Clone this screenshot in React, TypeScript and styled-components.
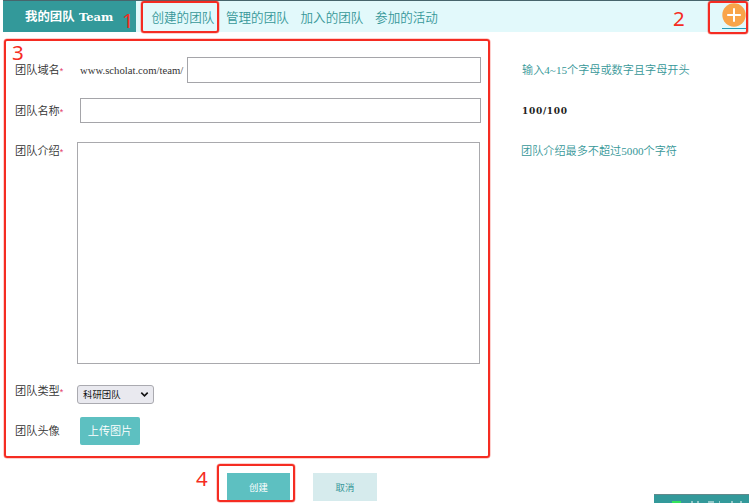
import React from "react";
import styled, { createGlobalStyle } from "styled-components";

const Global = createGlobalStyle`
  * { box-sizing: border-box; }
  html, body { margin: 0; background: #fff; overflow: hidden; }
  body { font-family: "Liberation Serif", "Noto Sans CJK SC", serif; color: #333; }
  button, input, textarea { font-family: inherit; margin: 0; outline: none; }
`;

const cjk = `"Noto Sans CJK SC", sans-serif`;

const Page = styled.div`
  position: relative;
  width: 749px;
  height: 503px;
  overflow: hidden;
  background: #fff;
`;

const Header = styled.header`
  display: flex;
  height: 32px;
  margin-left: 3px;
  border-top: 1px solid #47656c;
  background: #e2f9fb;
`;

const Brand = styled.h1`
  width: 133px;
  margin: 0;
  padding-left: 22px;
  background: #33999a;
  color: #fff;
  font: bold 12.4px/32px "DejaVu Serif", "Noto Sans CJK SC", serif;
  white-space: nowrap;
`;

const BrandLatin = styled.span`
  font-size: 11.6px;
`;

const Nav = styled.nav`
  display: flex;
  gap: 11.8px;
  margin-left: 15.5px;
`;

const NavLink = styled.a`
  color: #369798;
  font: 350 12.55px/31px ${cjk};
  white-space: nowrap;
`;

const AddButton = styled.a`
  display: flex;
  justify-content: center;
  width: 24px;
  height: 28px;
  margin-left: auto;
  margin-right: 3px;
  border-bottom: 1px solid #2499b8;
`;

const Form = styled.form`
  padding: 25px 0 0 15px;
`;

const Row = styled.div<{ $height: number }>`
  display: flex;
  align-items: flex-start;
  height: ${(p) => p.$height}px;
`;

const Label = styled.label<{ $width?: number; $drop?: number }>`
  width: ${(p) => p.$width ?? 65}px;
  flex: none;
  padding-top: ${(p) => p.$drop ?? 0}px;
  font: 350 11.2px/25px ${cjk};
  white-space: nowrap;
`;

const Required = styled.span`
  color: #e33c68;
  font: 9px/10px "Liberation Sans", sans-serif;
`;

const Prefix = styled.span`
  width: 107px;
  flex: none;
  font-size: 10.7px;
  line-height: 27px;
  white-space: nowrap;
`;

const TextInput = styled.input<{ $width: number; $height: number }>`
  width: ${(p) => p.$width}px;
  height: ${(p) => p.$height}px;
  padding: 2px 5px;
  border: 1px solid #a5a5a9;
  background: #fff;
`;

const AreaSlot = styled.div`
  height: 226px;
  padding-top: 4px;
`;

const TextArea = styled.textarea`
  display: block;
  width: 403px;
  height: 222px;
  padding: 4px;
  border: 1px solid #a9a9ad;
  resize: none;
`;

const Hint = styled.span`
  margin-left: 41px;
  color: #369798;
  font: 350 11.15px/26px "Liberation Serif", "Noto Sans CJK SC", serif;
  white-space: nowrap;
`;

const Counter = styled.strong`
  margin-left: 41px;
  color: #222;
  font: bold 9px/26px "DejaVu Serif", serif;
  letter-spacing: 0.7px;
`;

const Select = styled.div`
  display: flex;
  align-items: center;
  justify-content: space-between;
  width: 77px;
  height: 19px;
  margin-top: 7px;
  padding: 0 4px 0 5px;
  border: 1px solid #aaaab0;
  border-radius: 3px;
  background: #e9e9ef;
  color: #111;
  font: 9.4px/17px ${cjk};
`;

const Upload = styled.button`
  width: 60px;
  height: 28px;
  margin-top: 1px;
  padding: 0 0 1px;
  border: 0;
  border-radius: 2px;
  background: #5dc0c1;
  color: #fff;
  font: 350 11.1px/27px ${cjk};
`;

const Actions = styled.div`
  display: flex;
  gap: 23px;
  padding: 18px 0 0 212px;
`;

const ActionButton = styled.button<{ $primary?: boolean }>`
  width: ${(p) => (p.$primary ? 63 : 64)}px;
  height: 28px;
  padding: 0;
  border: 0;
  background: ${(p) => (p.$primary ? "#5dc0c1" : "#d6ebed")};
  color: ${(p) => (p.$primary ? "#fff" : "#369798")};
  font: 9.4px/28px ${cjk};
`;

const Mark = styled.div<{ $x: number; $y: number; $w: number; $h: number }>`
  position: absolute;
  left: ${(p) => p.$x}px;
  top: ${(p) => p.$y}px;
  width: ${(p) => p.$w}px;
  height: ${(p) => p.$h}px;
  border: 2px solid #f52c22;
  border-radius: 3px;
  box-shadow: 0 0 0 0.5px #f52c2270;
  pointer-events: none;
`;

const MarkNumber = styled.span<{ $x: number; $y: number }>`
  position: absolute;
  left: ${(p) => p.$x}px;
  top: ${(p) => p.$y}px;
  color: #f52c22;
  font: 400 20.5px/20px "Noto Sans", sans-serif;
`;

const ChatBar = styled.div`
  position: absolute;
  right: 0;
  bottom: 0;
  display: flex;
  align-items: flex-start;
  width: 95px;
  height: 9px;
  border-top: 1px solid #62898b;
  background: #33999a;
`;

export default function App() {
  return (
    <>
      <Global />
      <Page>
        <Header>
          <Brand>我的团队 <BrandLatin>Team</BrandLatin></Brand>
          <Nav>
            {["创建的团队", "管理的团队", "加入的团队", "参加的活动"].map((t) => (
              <NavLink key={t}>{t}</NavLink>
            ))}
          </Nav>
          <AddButton aria-label="add">
            <svg width="24" height="27" viewBox="0 0 24 27">
              <circle cx="12" cy="14" r="11.7" fill="#f9a449" />
              <path d="M12 7.2v13.6M5.2 14h13.6" stroke="#fff" strokeWidth="2" />
            </svg>
          </AddButton>
        </Header>
        <Form>
          <Row $height={41}>
            <Label>团队域名<Required>*</Required></Label>
            <Prefix>www.scholat.com/team/</Prefix>
            <TextInput $width={294} $height={26} />
            <Hint>输入4~15个字母或数字且字母开头</Hint>
          </Row>
          <Row $height={40}>
            <Label>团队名称<Required>*</Required></Label>
            <TextInput $width={401} $height={25} />
            <Counter>100/100</Counter>
          </Row>
          <Row $height={240}>
            <Label $width={62}>团队介绍<Required>*</Required></Label>
            <AreaSlot><TextArea /></AreaSlot>
            <Hint>团队介绍最多不超过5000个字符</Hint>
          </Row>
          <Row $height={38}>
            <Label $width={62}>团队类型<Required>*</Required></Label>
            <Select>
              科研团队
              <svg width="9" height="7" viewBox="0 0 9 7">
                <path d="M1.3 1.6 4.5 4.8 7.7 1.6" fill="none" stroke="#111" strokeWidth="1.6" />
              </svg>
            </Select>
          </Row>
          <Row $height={39}>
            <Label $drop={2}>团队头像</Label>
            <Upload type="button">上传图片</Upload>
          </Row>
          <Actions>
            <ActionButton type="button" $primary>创建</ActionButton>
            <ActionButton type="button">取消</ActionButton>
          </Actions>
        </Form>
        <ChatBar>
          <svg width="95" height="8" viewBox="0 0 95 8">
            <rect x="18" y="6" width="9" height="2" fill="#35e35b" />
            <path d="M37 7h2M43 7h2M54 7h6M65 7h1M77 7h2M86 7h2" stroke="#b5dada" strokeWidth="1.5" />
          </svg>
        </ChatBar>
        <Mark $x={141} $y={1} $w={78} $h={32} />
        <Mark $x={708} $y={1} $w={40} $h={33} />
        <Mark $x={4} $y={39} $w={486} $h={419} />
        <Mark $x={217} $y={464} $w={78} $h={38} />
        <MarkNumber $x={122} $y={10}>1</MarkNumber>
        <MarkNumber $x={673} $y={8}>2</MarkNumber>
        <MarkNumber $x={12} $y={42}>3</MarkNumber>
        <MarkNumber $x={196} $y={468}>4</MarkNumber>
      </Page>
    </>
  );
}
